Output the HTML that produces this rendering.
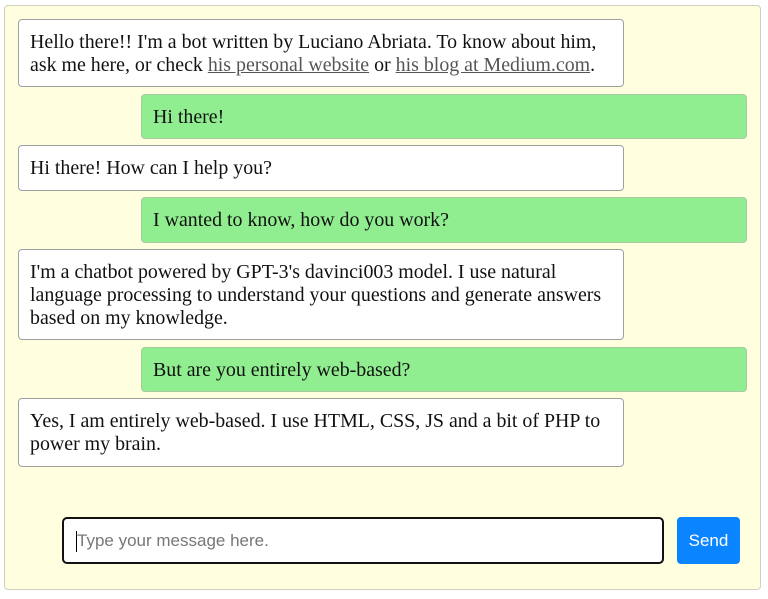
<!DOCTYPE html>
<html><head><style>
html,body{margin:0;padding:0;background:#fff;width:768px;height:599px;overflow:hidden}
#c{position:absolute;left:4px;top:5px;width:755px;height:583px;background:#ffffe0;border:1px solid #d0d0c0;border-radius:4px}
.m{position:absolute;box-sizing:border-box;padding:11px 11px 10px;font:19.9px/23px "Liberation Serif",serif;color:#111;border-radius:4px;white-space:nowrap}
.b{left:18px;width:606px;background:#fff;border:1px solid #a0a0a0}
.u{left:141px;width:606px;background:#90ee90;border:1px solid #a8c8a0}
a{color:#555;text-decoration:underline}
#in{position:absolute;left:62px;top:517px;width:602px;height:47px;box-sizing:border-box;border:2px solid #111;border-radius:5px;background:#fff;font:17px "Liberation Sans",sans-serif;color:#777;padding:12px 0 0 13px}
#in:before{content:"";position:absolute;left:12px;top:12px;width:1px;height:21px;background:#000}
#s{position:absolute;left:677px;top:517px;width:63px;height:47px;background:#0a84ff;border-radius:4px;color:#fff;font:17px/47px "Liberation Sans",sans-serif;text-align:center}
</style></head><body>
<div id="c"></div>
<div class="m b" style="top:19px;height:68px">Hello there!! I'm a bot written by Luciano Abriata. To know about him,<br>ask me here, or check <a>his personal website</a> or <a>his blog at Medium.com</a>.</div>
<div class="m u" style="top:94px;height:45px">Hi there!</div>
<div class="m b" style="top:145px;height:46px">Hi there! How can I help you?</div>
<div class="m u" style="top:197px;height:46px">I wanted to know, how do you work?</div>
<div class="m b" style="top:249px;height:91px">I'm a chatbot powered by GPT-3's davinci003 model. I use natural<br>language processing to understand your questions and generate answers<br>based on my knowledge.</div>
<div class="m u" style="top:347px;height:45px">But are you entirely web-based?</div>
<div class="m b" style="top:398px;height:69px">Yes, I am entirely web-based. I use HTML, CSS, JS and a bit of PHP to<br>power my brain.</div>
<div id="in">Type your message here.</div>
<div id="s">Send</div>
</body></html>
